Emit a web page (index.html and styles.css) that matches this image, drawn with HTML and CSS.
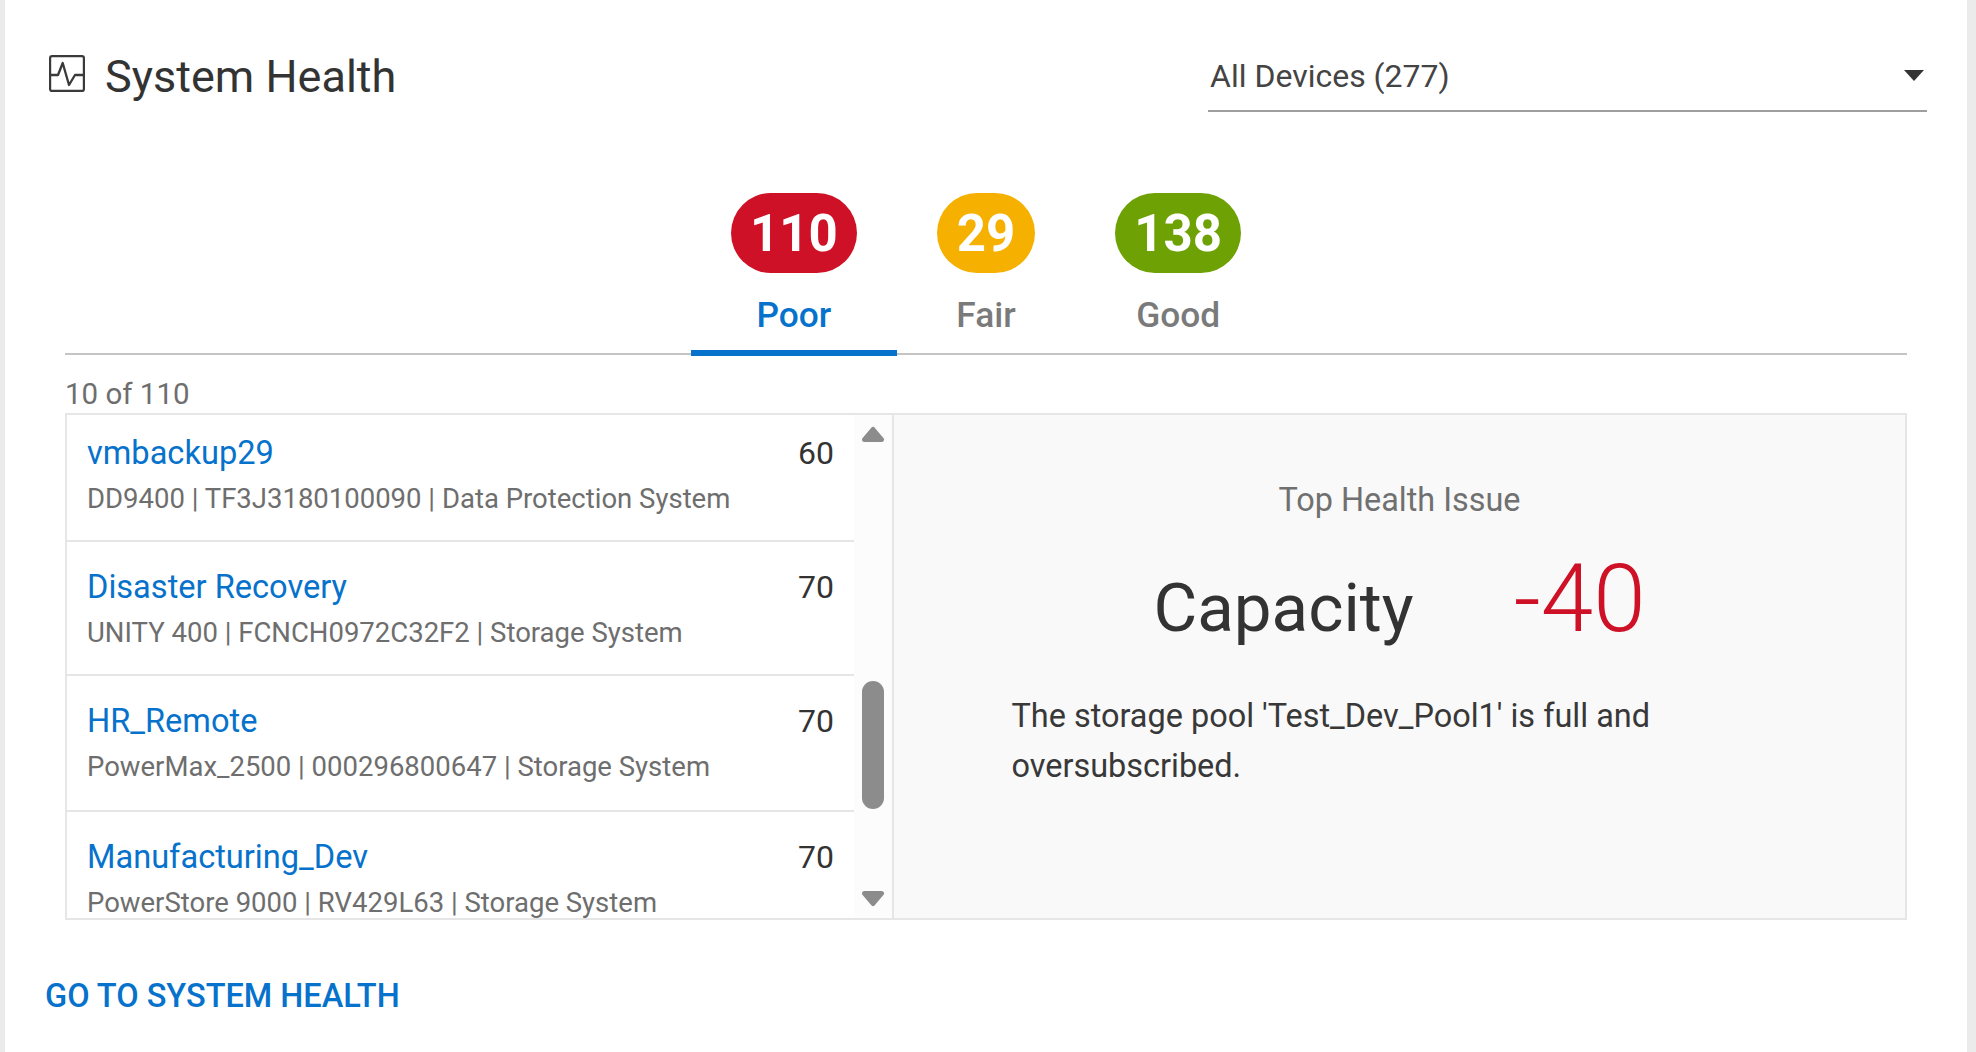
FILE: index.html
```html
<!DOCTYPE html>
<html lang="en">
<head>
<meta charset="utf-8">
<title>System Health</title>
<link rel="stylesheet" href="styles.css">
</head>
<body>
<main class="card">
  <header class="head">
    <div class="title-wrap">
      <svg class="title-icon" viewBox="0 0 36 37" width="36" height="37" aria-hidden="true">
        <rect x="1.1" y="1.1" width="33.8" height="34.8" rx="2" fill="none" stroke="#3a3a3a" stroke-width="2.2"/>
        <path d="M1 20H9L13.7 8L20 30L26 20H35" fill="none" stroke="#3a3a3a" stroke-width="2.3" stroke-linejoin="round"/>
      </svg>
      <h1 class="title">System Health</h1>
    </div>
    <div class="select">
      <span>All Devices (277)</span>
      <span class="caret"></span>
    </div>
  </header>

  <nav class="tabs">
    <div class="tab active"><span class="pill red">110</span><span class="tab-label">Poor</span></div>
    <div class="tab"><span class="pill amber">29</span><span class="tab-label">Fair</span></div>
    <div class="tab"><span class="pill green">138</span><span class="tab-label">Good</span></div>
  </nav>

  <div class="count">10 of 110</div>

  <section class="box">
    <div class="list-col">
      <ul class="list">
        <li class="row r1"><div class="row-top"><a class="name">vmbackup29</a><span class="score">60</span></div><div class="sub">DD9400 | TF3J3180100090 | Data Protection System</div></li>
        <li class="row r2"><div class="row-top"><a class="name">Disaster Recovery</a><span class="score">70</span></div><div class="sub">UNITY 400 | FCNCH0972C32F2 | Storage System</div></li>
        <li class="row r3"><div class="row-top"><a class="name">HR_Remote</a><span class="score">70</span></div><div class="sub">PowerMax_2500 | 000296800647 | Storage System</div></li>
        <li class="row r4"><div class="row-top"><a class="name">Manufacturing_Dev</a><span class="score">70</span></div><div class="sub">PowerStore 9000 | RV429L63 | Storage System</div></li>
      </ul>
      <div class="scrollbar">
        <svg class="arrow-up" viewBox="0 0 24 18" width="24" height="18" aria-hidden="true"><path d="M12 4.5L20.5 14.5H3.5Z" fill="#8c8c8c" stroke="#8c8c8c" stroke-width="5" stroke-linejoin="round"/></svg>
        <div class="thumb"></div>
        <svg class="arrow-down" viewBox="0 0 24 18" width="24" height="18" aria-hidden="true"><path d="M12 13.5L20.5 3.5H3.5Z" fill="#8c8c8c" stroke="#8c8c8c" stroke-width="5" stroke-linejoin="round"/></svg>
      </div>
    </div>
    <div class="detail">
      <div class="detail-head">Top Health Issue</div>
      <div class="detail-main"><span class="issue">Capacity</span><span class="delta">-40</span></div>
      <p class="detail-text">The storage pool 'Test_Dev_Pool1' is full and oversubscribed.</p>
    </div>
  </section>

  <a class="go">GO TO SYSTEM HEALTH</a>
</main>
</body>
</html>
```
FILE: styles.css
```css
* { box-sizing: border-box; }
html, body { margin: 0; height: 100%; }
body {
  background: #ebebeb;
  font-family: Roboto, "Liberation Sans", sans-serif;
  overflow: hidden;
  padding: 0 9px 0 5px;
}
.card {
  background: #fff;
  height: 1052px;
  width: 1962px;
  padding: 0 60px;
  display: flex;
  flex-direction: column;
}
.head {
  display: flex;
  justify-content: space-between;
  height: 112px;
  margin: 0 -20px 0 -16px;
}
.title-wrap { display: flex; align-items: center; gap: 20px; padding-top: 41px; height: 112px; }
.title-icon { display: block; margin-top: -7px; }
.title { margin: 0; font-size: 45px; font-weight: 400; color: #333; line-height: 1; }
.select {
  width: 719px;
  height: 112px;
  padding: 42px 3px 0 2px;
  border-bottom: 2px solid #9e9e9e;
  display: flex;
  justify-content: space-between;
  align-items: center;
  font-size: 32px;
  color: #444;
}
.caret {
  width: 0; height: 0;
  margin-top: -2px;
  border-left: 10px solid transparent;
  border-right: 10px solid transparent;
  border-top: 11px solid #333;
}
.tabs {
  margin-top: 81px;
  display: flex;
  justify-content: center;
  border-bottom: 2px solid #c4c4c4;
  height: 162px;
}
.tab {
  padding: 0 40px;
  height: 163px;
  display: flex;
  flex-direction: column;
  align-items: center;
  border-bottom: 6px solid transparent;
  margin-bottom: -3px;
}
.tab.active { border-bottom-color: #0672cb; }
.pill {
  height: 80px;
  min-width: 80px;
  padding: 0 19px;
  border-radius: 40px;
  color: #fff;
  font-size: 51px;
  font-weight: 700;
  display: flex;
  align-items: center;
  justify-content: center;
}
.red { background: #ce1126; }
.amber { background: #f5b000; padding: 0 20px; }
.green { background: #6ea204; }
.tab-label {
  margin-top: 22px;
  font-size: 35.3px;
  line-height: 40px;
  font-weight: 500;
  color: #7a7a7a;
}
.tab.active .tab-label { color: #0672cb; }
.count { margin-top: 21px; font-size: 29.5px; line-height: 36px; color: #6e6e6e; height: 37px; }
.box {
  height: 507px;
  border: 2px solid #e6e6e6;
  display: flex;
}
.list-col { width: 827px; display: flex; flex: none; border-right: 2px solid #e6e6e6; overflow: hidden; }
.list { list-style: none; margin: 0; padding: 0; width: 787px; flex: none; }
.row { padding: 25px 20px 0; border-bottom: 2px solid #e6e6e6; }
.r1 { height: 127px; padding-top: 18px; }
.r2 { height: 134px; }
.r3 { height: 136px; }
.r4 { height: 106px; border-bottom: 0; }
.row-top { display: flex; justify-content: space-between; align-items: center; }
.name { font-size: 32.6px; line-height: 40px; color: #0672cb; }
.score { font-size: 32px; line-height: 40px; color: #333; }
.sub { margin-top: 11px; font-size: 27.5px; line-height: 30px; color: #6e6e6e; white-space: nowrap; }
.scrollbar { flex: 1; background: #fcfcfc; display: flex; flex-direction: column; align-items: center; }
.arrow-up { margin-top: 10px; flex: none; }
.thumb { width: 22px; height: 128px; margin-top: 238px; border-radius: 11px; background: #8c8c8c; flex: none; }
.arrow-down { margin-top: 81px; flex: none; }
.detail { flex: 1; background: #f9f9f9; display: flex; flex-direction: column; align-items: center; }
.detail-head { margin-top: 65px; font-size: 32.4px; line-height: 40px; color: #707070; }
.detail-main { margin-top: 33.5px; display: flex; align-items: baseline; justify-content: center; gap: 100px; }
.issue { font-size: 67.3px; color: #333; line-height: 90px; }
.delta { font-size: 94.5px; font-weight: 300; color: #ce1126; line-height: 90px; }
.detail-text { margin: 38.5px 0 0; width: 776px; font-size: 32.45px; line-height: 50px; color: #383838; }
.go { margin: 56px 0 0 -20px; font-size: 32.5px; line-height: 40px; font-weight: 500; color: #0672cb; }
```
